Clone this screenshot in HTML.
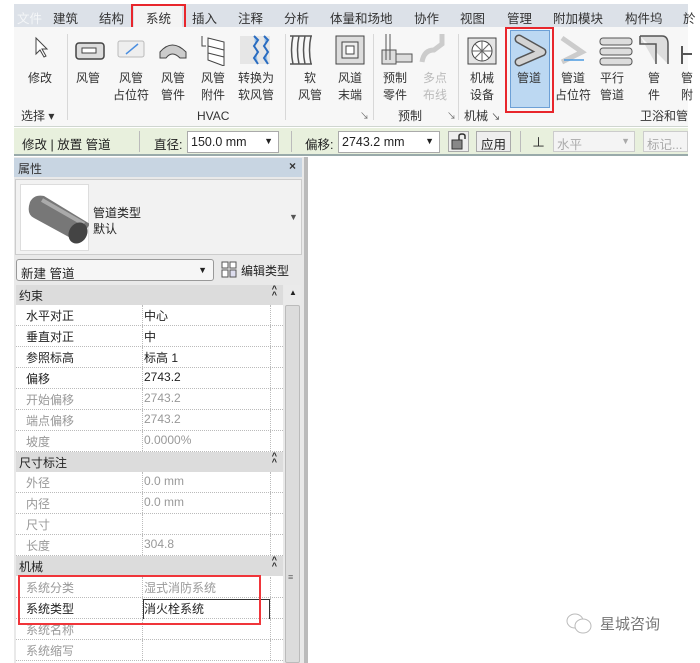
<!DOCTYPE html>
<html><head><meta charset="utf-8"><style>
*{margin:0;padding:0;box-sizing:border-box}
body{width:700px;height:663px;background:#fff;position:relative;overflow:hidden;font-family:"Liberation Sans","Noto Sans CJK SC",sans-serif;font-size:12px;color:#222}
.a{position:absolute}
.tab{position:absolute;top:8px;font-size:12.5px;color:#333}
.lbl{position:absolute;font-size:12px;color:#333;text-align:center;line-height:17px;white-space:nowrap}
.row{position:absolute;left:16px;width:267px;height:21px;border-bottom:1px dotted #bbb;background:#fff}
.row .k{position:absolute;left:10px;top:2px;font-size:12px}
.row .v{position:absolute;left:128px;top:2px;font-size:12px}
.row .c1{position:absolute;left:126px;top:0;height:20px;border-left:1px dotted #bbb}
.row .c2{position:absolute;left:254px;top:0;height:20px;border-left:1px dotted #bbb}
.hd{position:absolute;left:16px;width:267px;height:20px;background:#dcdcdc;font-size:12px}
.hd span{position:absolute;left:3px;top:2px}
.hd b{position:absolute;right:6px;top:1px;font-size:9px;line-height:6px;font-weight:bold}
.g{color:#999}
.sep{position:absolute;top:34px;width:1px;height:86px;background:#d8d8d8}
</style></head><body>
<!-- tab bar -->
<div class="a" style="left:14px;top:4px;width:674px;height:23px;background:#dce1e8"></div>
<div class="tab" style="left:17px;color:#f4f6f8">文件</div>
<div class="tab" style="left:53px">建筑</div>
<div class="tab" style="left:99px">结构</div>
<div class="a" style="left:134px;top:5px;width:48px;height:23px;background:#f4f4f4"></div>
<div class="tab" style="left:146px">系统</div>
<div class="tab" style="left:192px">插入</div>
<div class="tab" style="left:238px">注释</div>
<div class="tab" style="left:284px">分析</div>
<div class="tab" style="left:330px">体量和场地</div>
<div class="tab" style="left:414px">协作</div>
<div class="tab" style="left:460px">视图</div>
<div class="tab" style="left:507px">管理</div>
<div class="tab" style="left:553px">附加模块</div>
<div class="tab" style="left:625px">构件坞</div>
<div class="tab" style="left:683px">於</div>
<div class="a" style="left:131px;top:4px;width:55px;height:27px;border:2px solid #e8262c"></div>
<!-- ribbon -->
<div class="a" style="left:14px;top:27px;width:674px;height:100px;background:#f7f7f7;border-bottom:1px solid #cfd6d0"></div>
<div class="sep" style="left:67px"></div><div class="sep" style="left:285px"></div><div class="sep" style="left:373px"></div><div class="sep" style="left:458px"></div>
<svg class="a" style="left:14px;top:30px" width="674" height="36" viewBox="0 0 674 36">
<path d="M22 8 L22 24 L26 20 L30 27 L32 26 L28 19 L33 19 Z" fill="#fff" stroke="#444"/>
<rect x="62" y="13" width="28" height="16" rx="3" fill="#ddd" stroke="#444" stroke-width="1.5"/><rect x="68" y="18" width="14" height="5" fill="#fff" stroke="#444"/>
<rect x="104" y="11" width="26" height="16" rx="2" fill="#eee" stroke="#bbb"/><path d="M112 24 L124 14" stroke="#4a8ee0" stroke-width="1.5"/>
<path d="M146 22 Q158 8 172 22 L172 28 L166 28 Q158 20 152 28 L146 28 Z" fill="#ccc" stroke="#444"/>
<path d="M188 6 L188 16 L192 16 M194 8 L210 12 L210 36 L194 30 Z M194 16 L210 20 M194 23 L210 27" fill="#fff" stroke="#444"/>
<rect x="226" y="6" width="30" height="28" fill="#e6e6e6"/><path d="M240 6 L244 10 L240 16 L244 22 L240 28 L244 34 M250 6 L254 10 L250 16 L254 22 L250 28 L254 34" stroke="#2a6cc0" stroke-width="2" fill="#9cc4ec"/>
<path d="M276 6 L298 6 M276 34 L298 34 M279 6 Q276 20 279 34 M285 6 Q282 20 285 34 M291 6 Q288 20 291 34 M297 6 Q294 20 297 34" stroke="#555" fill="none" stroke-width="1.5"/>
<rect x="322" y="6" width="28" height="28" fill="#ddd" stroke="#444"/><rect x="328" y="12" width="16" height="16" fill="#eee" stroke="#444"/><rect x="332" y="16" width="8" height="8" fill="#fff" stroke="#444"/>
<path d="M372 4 L372 30 M376 4 L376 30 M368 20 L382 20 L382 34 L368 34 Z M382 24 L398 24 L398 32 L382 32" stroke="#555" fill="#ddd"/>
<path d="M408 32 Q410 20 420 20 L428 14 L428 4" stroke="#ccc" stroke-width="5" fill="none"/>
<rect x="454" y="8" width="28" height="26" fill="#e4e4e4" stroke="#444"/><circle cx="468" cy="21" r="10" fill="#fff" stroke="#444"/><path d="M468 11 L468 31 M458 21 L478 21 M461 14 L475 28 M475 14 L461 28" stroke="#666"/>
</svg>
<div class="a" style="left:510px;top:30px;width:40px;height:78px;background:#bcd8f2;border:1px solid #6da0d6"></div>
<svg class="a" style="left:512px;top:32px" width="180" height="36">
<path d="M7 7 L30 20 L7 30" stroke="#555" stroke-width="9" fill="none" stroke-linejoin="round" stroke-linecap="round"/><path d="M7 7 L30 20 L7 30" stroke="#d4d4d4" stroke-width="6" fill="none" stroke-linejoin="round" stroke-linecap="round"/>
<path d="M50 6 L70 20 L50 30" stroke="#ccc" stroke-width="5" fill="none"/><path d="M52 28 L72 28" stroke="#4a9ae0" stroke-width="1.5"/>
<rect x="88" y="6" width="32" height="7" rx="3" fill="#ddd" stroke="#555"/><rect x="88" y="16" width="32" height="7" rx="3" fill="#ddd" stroke="#555"/><rect x="88" y="26" width="32" height="7" rx="3" fill="#ddd" stroke="#555"/>
<path d="M128 4 L128 12 L144 12 L144 32 M128 4 L150 4 Q156 4 156 12 L156 32" stroke="#555" fill="#ddd" stroke-width="1.5"/>
<path d="M170 14 L170 32 M170 22 L180 22" stroke="#555" stroke-width="2"/>
</svg>
<div class="a" style="left:505px;top:27px;width:49px;height:86px;border:2px solid #e8262c"></div>
<div class="lbl" style="left:28px;top:70px">修改</div>
<div class="lbl" style="left:76px;top:70px">风管</div>
<div class="lbl" style="left:113px;top:70px">风管<br>占位符</div>
<div class="lbl" style="left:161px;top:70px">风管<br>管件</div>
<div class="lbl" style="left:201px;top:70px">风管<br>附件</div>
<div class="lbl" style="left:238px;top:70px">转换为<br>软风管</div>
<div class="lbl" style="left:298px;top:70px">软<br>风管</div>
<div class="lbl" style="left:338px;top:70px">风道<br>末端</div>
<div class="lbl" style="left:383px;top:70px">预制<br>零件</div>
<div class="lbl g" style="left:423px;top:70px;color:#bbb">多点<br>布线</div>
<div class="lbl" style="left:470px;top:70px">机械<br>设备</div>
<div class="lbl" style="left:517px;top:70px">管道</div>
<div class="lbl" style="left:555px;top:70px">管道<br>占位符</div>
<div class="lbl" style="left:600px;top:70px">平行<br>管道</div>
<div class="lbl" style="left:648px;top:70px">管<br>件</div>
<div class="lbl" style="left:681px;top:70px">管<br>附</div>
<div class="lbl" style="left:21px;top:108px">选择 ▾</div>
<div class="lbl" style="left:197px;top:108px">HVAC</div>
<div class="lbl" style="left:360px;top:108px;font-size:9px;color:#666">↘</div>
<div class="lbl" style="left:398px;top:108px">预制</div>
<div class="lbl" style="left:447px;top:108px;font-size:9px;color:#666">↘</div>
<div class="lbl" style="left:464px;top:108px">机械 <span style="font-size:9px">↘</span></div>
<div class="lbl" style="left:640px;top:108px">卫浴和管</div>
<!-- options bar -->
<div class="a" style="left:14px;top:128px;width:674px;height:28px;background:#e8f0dd;border-bottom:2px solid #9aa"></div>
<div class="a" style="left:22px;top:134px;font-size:12.5px">修改 | 放置 管道</div>
<div class="a" style="left:139px;top:131px;width:1px;height:21px;background:#bbb"></div>
<div class="a" style="left:154px;top:134px;font-size:12.5px">直径:</div>
<div class="a" style="left:187px;top:131px;width:92px;height:22px;background:#fff;border:1px solid #aaa;padding:3px 3px;font-size:12.5px">150.0 mm<span style="position:absolute;right:5px;top:4px;font-size:9px">▼</span></div>
<div class="a" style="left:291px;top:131px;width:1px;height:21px;background:#bbb"></div>
<div class="a" style="left:305px;top:134px;font-size:12.5px">偏移:</div>
<div class="a" style="left:338px;top:131px;width:102px;height:22px;background:#fff;border:1px solid #aaa;padding:3px 3px;font-size:12.5px">2743.2 mm<span style="position:absolute;right:5px;top:4px;font-size:9px">▼</span></div>
<div class="a" style="left:448px;top:131px;width:21px;height:21px;background:#eee;border:1px solid #aaa"></div>
<svg class="a" style="left:451px;top:133px" width="16" height="17"><rect x="1" y="7" width="10" height="9" fill="#888" stroke="#333"/><path d="M8 7 L8 3 Q8 1 11 1 Q14 1 14 3 L14 6" stroke="#333" fill="none" stroke-width="1.5"/></svg>
<div class="a" style="left:476px;top:131px;width:35px;height:21px;background:#eee;border:1px solid #aaa;font-size:12.5px;padding:2px 4px">应用</div>
<div class="a" style="left:520px;top:131px;width:1px;height:21px;background:#bbb"></div>
<div class="a" style="left:532px;top:132px;font-size:13px">⊥</div>
<div class="a" style="left:553px;top:131px;width:82px;height:21px;background:#f4f4f4;border:1px solid #ccc;color:#aaa;padding:2px 3px;font-size:12.5px">水平<span style="position:absolute;right:4px;top:4px;font-size:9px">▼</span></div>
<div class="a" style="left:643px;top:131px;width:45px;height:21px;background:#f4f4f4;border:1px solid #ccc;color:#aaa;padding:2px 3px;font-size:12.5px">标记...</div>
<!-- properties panel -->
<div class="a" style="left:14px;top:157px;width:294px;height:506px;background:#e9e9e9;border-right:4px solid #a8a8a8"></div>
<div class="a" style="left:14px;top:158px;width:288px;height:19px;background:#c8d5e2;font-size:12px;padding:2px 4px;color:#333">属性<span style="position:absolute;right:6px;top:1px;font-weight:bold">×</span></div>
<div class="a" style="left:15px;top:179px;width:287px;height:76px;background:#f2f2f2;border:1px solid #ccc"></div>
<div class="a" style="left:20px;top:184px;width:69px;height:67px;background:#fff;border:1px solid #ddd"></div>
<svg class="a" style="left:20px;top:184px" width="69" height="67"><path d="M10 18 Q6 30 14 34 L58 58 L70 40 L24 12 Q14 10 10 18Z" fill="#777"/><path d="M22 16 L64 40" stroke="#aaa" stroke-width="4"/><ellipse cx="58" cy="49" rx="9" ry="11" transform="rotate(30 58 49)" fill="#444"/></svg>
<div class="a" style="left:93px;top:205px;font-size:12px;line-height:16px">管道类型<br>默认</div>
<div class="a" style="left:289px;top:212px;font-size:9px;color:#555">▼</div>
<div class="a" style="left:16px;top:259px;width:198px;height:22px;background:#f6f6f6;border:1px solid #999;border-radius:3px;padding:3px 4px;font-size:12.5px">新建 管道<span style="position:absolute;right:6px;top:5px;font-size:9px">▼</span></div>
<svg class="a" style="left:221px;top:261px" width="16" height="17"><rect x="1" y="1" width="6" height="6" fill="#fff" stroke="#555"/><rect x="1" y="9" width="6" height="7" fill="#fff" stroke="#555"/><rect x="9" y="1" width="6" height="6" fill="#fff" stroke="#555"/><rect x="9" y="9" width="6" height="7" fill="#dde" stroke="#555"/></svg>
<div class="a" style="left:241px;top:262px;font-size:12px">编辑类型</div>
<!-- grid -->
<div class="a" style="left:16px;top:285px;width:267px;height:378px;background:#fff"></div>
<div class="a" style="left:284px;top:285px;width:17px;height:378px;background:#eaeaea"></div>
<div class="a" style="left:285px;top:305px;width:15px;height:358px;background:#dcdcdc;border:1px solid #bbb;border-radius:2px"></div>
<div class="a" style="left:289px;top:288px;font-size:8px">▲</div>
<div class="a" style="left:288px;top:572px;font-size:9px;color:#666">≡</div>
<div class="hd" style="top:285px"><span>约束</span><b>^<br>^</b></div>
<div class="row" style="top:305px"><span class="k">水平对正</span><span class="v">中心</span><i class="c1"></i><i class="c2"></i></div>
<div class="row" style="top:326px"><span class="k">垂直对正</span><span class="v">中</span><i class="c1"></i><i class="c2"></i></div>
<div class="row" style="top:347px"><span class="k">参照标高</span><span class="v">标高 1</span><i class="c1"></i><i class="c2"></i></div>
<div class="row" style="top:368px"><span class="k">偏移</span><span class="v">2743.2</span><i class="c1"></i><i class="c2"></i></div>
<div class="row g" style="top:389px"><span class="k">开始偏移</span><span class="v">2743.2</span><i class="c1"></i><i class="c2"></i></div>
<div class="row g" style="top:410px"><span class="k">端点偏移</span><span class="v">2743.2</span><i class="c1"></i><i class="c2"></i></div>
<div class="row g" style="top:431px"><span class="k">坡度</span><span class="v">0.0000%</span><i class="c1"></i><i class="c2"></i></div>
<div class="hd" style="top:452px"><span>尺寸标注</span><b>^<br>^</b></div>
<div class="row g" style="top:472px"><span class="k">外径</span><span class="v">0.0 mm</span><i class="c1"></i><i class="c2"></i></div>
<div class="row g" style="top:493px"><span class="k">内径</span><span class="v">0.0 mm</span><i class="c1"></i><i class="c2"></i></div>
<div class="row g" style="top:514px"><span class="k">尺寸</span><span class="v"></span><i class="c1"></i><i class="c2"></i></div>
<div class="row g" style="top:535px"><span class="k">长度</span><span class="v">304.8</span><i class="c1"></i><i class="c2"></i></div>
<div class="hd" style="top:556px"><span>机械</span><b>^<br>^</b></div>
<div class="row g" style="top:577px"><span class="k">系统分类</span><span class="v">湿式消防系统</span><i class="c1"></i><i class="c2"></i></div>
<div class="row" style="top:598px"><span class="k">系统类型</span><span class="v">消火栓系统</span><i class="c1"></i><i class="c2"></i></div>
<div class="a" style="left:143px;top:599px;width:127px;height:21px;border:1px solid #333"></div>
<div class="row g" style="top:619px"><span class="k">系统名称</span><i class="c1"></i><i class="c2"></i></div>
<div class="row g" style="top:640px"><span class="k">系统缩写</span><i class="c1"></i><i class="c2"></i></div>
<div class="a" style="left:18px;top:575px;width:243px;height:50px;border:2px solid #f0353a"></div>
<!-- canvas -->
<div class="a" style="left:304px;top:157px;width:4px;height:506px;background:#bbb"></div>
<!-- watermark -->
<svg class="a" style="left:565px;top:612px" width="30" height="24"><ellipse cx="10" cy="9" rx="8" ry="7" fill="none" stroke="#bbb"/><ellipse cx="18" cy="14" rx="8" ry="7" fill="#fff" stroke="#bbb"/></svg>
<div class="a" style="left:600px;top:613px;font-size:15px;color:#777">星城咨询</div>
</body></html>
